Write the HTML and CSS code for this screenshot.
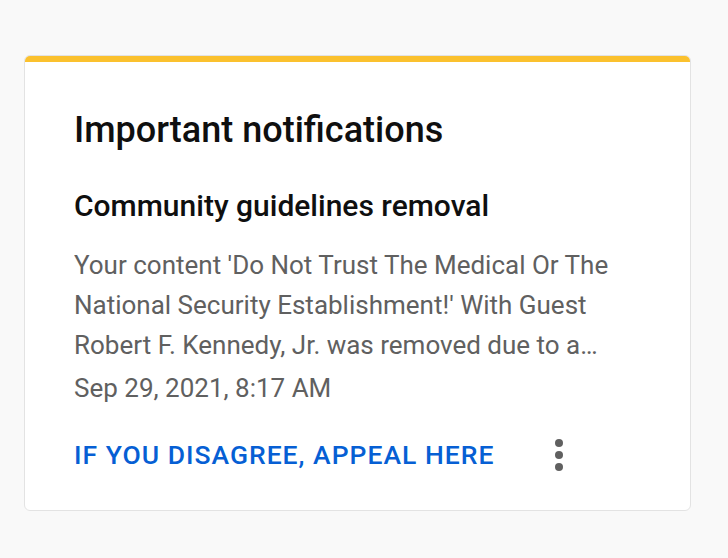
FILE: index.html
```html
<!DOCTYPE html>
<html>
<head>
<meta charset="utf-8">
<link rel="stylesheet" href="styles.css">
</head>
<body>
<div class="card">
  <div class="stripe"></div>
  <div class="content">
    <h1 class="title">Important notifications</h1>
    <h2 class="subtitle">Community guidelines removal</h2>
    <p class="body">Your content 'Do Not Trust The Medical Or The National Security Establishment!' With Guest Robert F. Kennedy, Jr. was removed due to a violation of our Community Guidelines.</p>
    <div class="date">Sep 29, 2021, 8:17 AM</div>
    <div class="actions">
      <a class="link" href="#">IF YOU DISAGREE, APPEAL HERE</a>
      <svg class="kebab" width="8" height="32" viewBox="0 0 8 32"><circle cx="4" cy="4" r="4" fill="#606060"/><circle cx="4" cy="16" r="4" fill="#606060"/><circle cx="4" cy="28" r="4" fill="#606060"/></svg>
    </div>
  </div>
</div>
</body>
</html>
```
FILE: styles.css
```css
html, body {
  margin: 0;
  padding: 0;
  background: #f9f9f9;
}
body {
  padding: 55px 0 0 24px;
  font-family: Roboto, "Liberation Sans", sans-serif;
}
.card {
  width: 667px;
  box-sizing: border-box;
  background: #fff;
  border: 1px solid #e3e3e3;
  border-radius: 6px;
  overflow: hidden;
}
.stripe {
  height: 6px;
  background: #fbc12e;
}
.content {
  padding: 46px 49px 35px 49px;
}
.title {
  margin: 0;
  font-size: 36px;
  line-height: 44px;
  font-weight: 500;
  color: #0f0f0f;
}
.subtitle {
  margin: 36px 0 0 0;
  font-size: 30px;
  line-height: 36px;
  font-weight: 500;
  color: #0f0f0f;
}
.body {
  margin: 21px 0 0 0;
  font-size: 26px;
  line-height: 40px;
  color: #606060;
  display: -webkit-box;
  -webkit-line-clamp: 3;
  -webkit-box-orient: vertical;
  overflow: hidden;
}
.date {
  margin-top: 3px;
  font-size: 26px;
  line-height: 40px;
  color: #606060;
}
.actions {
  margin-top: 27px;
  display: flex;
  align-items: center;
  height: 40px;
}
.link {
  font-size: 26.5px;
  line-height: 40px;
  font-weight: 500;
  letter-spacing: 1px;
  color: #065fd4;
  text-decoration: none;
}
.kebab {
  margin-left: 61px;
}
```
